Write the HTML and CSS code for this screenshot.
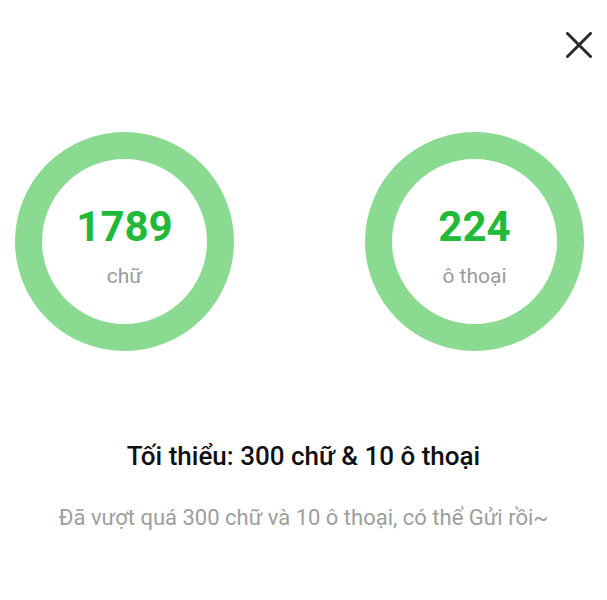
FILE: index.html
```html
<!DOCTYPE html>
<html lang="vi">
<head>
    <meta charset="UTF-8">
    <meta name="viewport" content="width=device-width, initial-scale=1.0">
    <title>Số chữ</title>
    <link rel="stylesheet" href="styles.css">
</head>
<body>
    <div class="sheet">
        <div class="top-bar">
            <button class="close-btn" aria-label="Đóng">
                <svg width="26" height="26" viewBox="0 0 26 26">
                    <path d="M1.5 1.5 L24.5 24.5 M24.5 1.5 L1.5 24.5" stroke="#2b2b2b" stroke-width="3" stroke-linecap="round" fill="none"/>
                </svg>
            </button>
        </div>
        <div class="stats">
            <div class="ring">
                <span class="ring-num">1789</span>
                <span class="ring-label">chữ</span>
            </div>
            <div class="ring">
                <span class="ring-num">224</span>
                <span class="ring-label">ô thoại</span>
            </div>
        </div>
        <h2 class="rule">Tối thiểu: 300 chữ &amp; 10 ô thoại</h2>
        <p class="status">Đã vượt quá 300 chữ và 10 ô thoại, có thể Gửi rồi~</p>
    </div>
</body>
</html>
```

FILE: styles.css
```css
body { margin: 0; background: #fff; font-family: Roboto, "Noto Sans", Arial, sans-serif; color: #111; }
.sheet { width: 607px; height: 600px; }
.top-bar { display: flex; justify-content: flex-end; padding: 32px 15px 0 0; height: 100px; box-sizing: border-box; }
.close-btn { background: none; border: 0; padding: 0; width: 26px; height: 26px; cursor: pointer; }
.close-btn svg { display: block; }
.stats { display: flex; justify-content: space-between; padding: 32px 23px 0 15px; }
.ring { width: 219px; height: 219px; box-sizing: border-box; border: 27px solid #8adb91; border-radius: 50%; display: flex; flex-direction: column; align-items: center; justify-content: center; }
.ring-num { font-size: 42px; font-weight: 700; color: #21b93a; line-height: 1; margin-top: 10px; }
.ring-label { font-size: 21px; color: #9b9b9b; margin-top: 16px; }
.rule { margin: 90px 0 0; text-align: center; font-size: 26px; font-weight: 500; color: #111; }
.status { margin: 34px 0 0; text-align: center; font-size: 22px; color: #9e9e9e; }
```
